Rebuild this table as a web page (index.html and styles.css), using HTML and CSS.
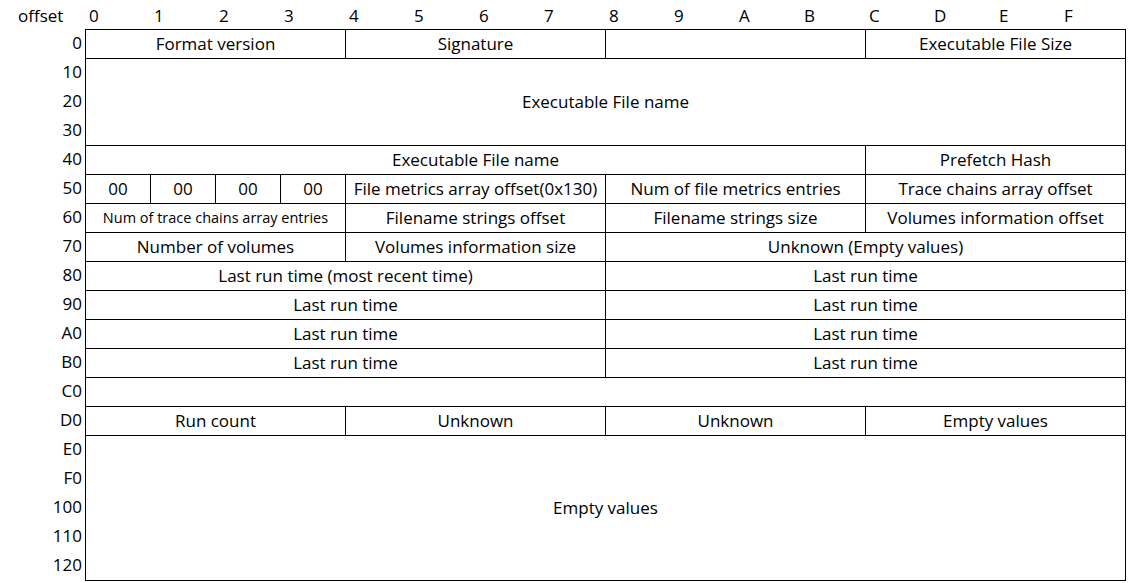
FILE: index.html
```html
<!DOCTYPE html>
<html>
<head>
<meta charset="utf-8">
<link rel="stylesheet" href="styles.css">
</head>
<body>
<div class="sheet">
  <div class="head">
    <div class="corner">offset</div>
    <div class="digits">
      <span>0</span><span>1</span><span>2</span><span>3</span><span>4</span><span>5</span><span>6</span><span>7</span>
      <span>8</span><span>9</span><span>A</span><span>B</span><span>C</span><span>D</span><span>E</span><span>F</span>
    </div>
  </div>
  <div class="body">
    <div class="labels">
      <div>0</div><div>10</div><div>20</div><div>30</div><div>40</div><div>50</div><div>60</div><div>70</div>
      <div>80</div><div>90</div><div>A0</div><div>B0</div><div>C0</div><div>D0</div><div>E0</div><div>F0</div>
      <div>100</div><div>110</div><div>120</div>
    </div>
    <div class="grid">
      <div class="c s4">Format version</div>
      <div class="c s4">Signature</div>
      <div class="c s4"></div>
      <div class="c s4">Executable File Size</div>

      <div class="c s16 r3">Executable File name</div>

      <div class="c s12">Executable File name</div>
      <div class="c s4">Prefetch Hash</div>

      <div class="c s1">00</div>
      <div class="c s1">00</div>
      <div class="c s1">00</div>
      <div class="c s1">00</div>
      <div class="c s4">File metrics array offset(0x130)</div>
      <div class="c s4">Num of file metrics entries</div>
      <div class="c s4">Trace chains array offset</div>

      <div class="c s4 small">Num of trace chains array entries</div>
      <div class="c s4">Filename strings offset</div>
      <div class="c s4">Filename strings size</div>
      <div class="c s4">Volumes information offset</div>

      <div class="c s4">Number of volumes</div>
      <div class="c s4">Volumes information size</div>
      <div class="c s8">Unknown (Empty values)</div>

      <div class="c s8">Last run time (most recent time)</div>
      <div class="c s8">Last run time</div>
      <div class="c s8">Last run time</div>
      <div class="c s8">Last run time</div>
      <div class="c s8">Last run time</div>
      <div class="c s8">Last run time</div>
      <div class="c s8">Last run time</div>
      <div class="c s8">Last run time</div>

      <div class="c s16"></div>

      <div class="c s4">Run count</div>
      <div class="c s4">Unknown</div>
      <div class="c s4">Unknown</div>
      <div class="c s4">Empty values</div>

      <div class="c s16 r5">Empty values</div>
    </div>
  </div>
</div>
</body>
</html>
```

FILE: styles.css
```css
html, body {
  margin: 0;
  padding: 0;
  background: #fff;
}

body {
  font-family: "Open Sans", "Noto Sans", sans-serif;
  font-size: 17px;
  color: #000;
}

.sheet {
  display: flex;
  flex-direction: column;
  width: 1128px;
}

.head {
  display: flex;
  height: 29px;
}

.corner {
  width: 85px;
  box-sizing: border-box;
  padding-left: 18px;
  padding-top: 2px;
  line-height: 27px;
}

.digits {
  display: grid;
  grid-template-columns: repeat(16, 65px);
}

.digits span {
  padding-left: 4px;
  padding-top: 2px;
  line-height: 27px;
}

.body {
  display: flex;
}

.labels {
  width: 85px;
  display: flex;
  flex-direction: column;
}

.labels div {
  height: 29px;
  box-sizing: border-box;
  padding-right: 3px;
  line-height: 28px;
  text-align: right;
}

.grid {
  display: grid;
  grid-template-columns: repeat(16, 65px);
  grid-auto-rows: 29px;
  border-right: 1px solid #000;
  border-bottom: 1px solid #000;
}

.c {
  border-left: 1px solid #000;
  border-top: 1px solid #000;
  padding-bottom: 2px;
  display: flex;
  align-items: center;
  justify-content: center;
  white-space: nowrap;
  overflow: hidden;
}

.s1 { grid-column: span 1; }
.s4 { grid-column: span 4; }
.s8 { grid-column: span 8; }
.s12 { grid-column: span 12; }
.s16 { grid-column: span 16; }
.r3 { grid-row: span 3; }
.r5 { grid-row: span 5; }

.small {
  font-size: 14.5px;
}
```
